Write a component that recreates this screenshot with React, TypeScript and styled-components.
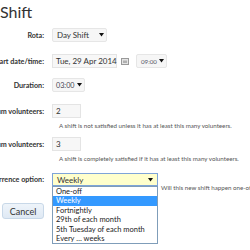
import React from "react";
import styled, { createGlobalStyle } from "styled-components";

const GlobalStyle = createGlobalStyle`
  html, body {
    margin: 0;
    padding: 0;
    background: #fff;
  }
  body {
    font-family: Lato, "Open Sans", sans-serif;
    color: #333;
  }
`;

const recurrenceOptions = [
  "One-off",
  "Weekly",
  "Fortnightly",
  "29th of each month",
  "5th Tuesday of each month",
  "Every \u2026 weeks",
];

const Arrow = () => (
  <ArrowSvg width="5" height="4" viewBox="0 0 5 4">
    <path d="M0 0 H5 L2.5 3.5 Z" fill="#111" />
  </ArrowSvg>
);

const CalendarIcon = () => (
  <svg width="8" height="7" viewBox="0 0 8 7">
    <rect x="0.5" y="0.5" width="7" height="6" fill="#e4e4e4" stroke="#999" />
    <rect x="2" y="2.5" width="4" height="2.5" fill="#b0b0b0" />
  </svg>
);

const App = () => {
  return (
    <Page>
      <GlobalStyle />
      <Title>Shift</Title>
      <Field>
        <Label>Rota:</Label>
        <Select width={55}>
          Day Shift <Arrow />
        </Select>
      </Field>
      <Field gap={12}>
        <Label>Start date/time:</Label>
        <Controls>
          <TextBox width={65}>Tue, 29 Apr 2014</TextBox>
          <IconButton>
            <CalendarIcon />
          </IconButton>
          <Select width={31} pad={4} size={6.2} tone="#556">
            09:00 <Arrow />
          </Select>
        </Controls>
      </Field>
      <Field gap={10}>
        <Label>Duration:</Label>
        <Select width={33} pad={3} size={7.2} tone="#445">
          03:00 <Arrow />
        </Select>
      </Field>
      <Field gap={12}>
        <Label>Minimum volunteers:</Label>
        <TextBox width={29}>2</TextBox>
      </Field>
      <Help>A shift is not satisfied unless it has at least this many volunteers.</Help>
      <Field gap={7}>
        <Label>Maximum volunteers:</Label>
        <TextBox width={29}>3</TextBox>
      </Field>
      <Help>A shift is completely satisfied if it has at least this many volunteers.</Help>
      <Field gap={10}>
        <Label>Recurrence option:</Label>
        <Controls>
          <DropdownWrap>
            <OpenSelect>
              Weekly <Arrow />
            </OpenSelect>
            <OptionList>
              {recurrenceOptions.map((option) => (
                <Option key={option} selected={option === "Weekly"}>
                  {option}
                </Option>
              ))}
            </OptionList>
          </DropdownWrap>
          <SideNote>Will this new shift happen one-off, or repeat?</SideNote>
        </Controls>
      </Field>
      <Field gap={17}>
        <ButtonCell>
          <Button>Cancel</Button>
        </ButtonCell>
      </Field>
    </Page>
  );
};

const Page = styled.div`
  width: 250px;
  height: 250px;
  overflow: hidden;
  display: flex;
  flex-direction: column;
`;
const Title = styled.h1`
  margin: 0;
  height: 28px;
  padding-top: 1px;
  box-sizing: border-box;
  font-size: 16px;
  line-height: 22px;
  font-weight: 400;
  color: #333;
`;
const Field = styled.div<{ gap?: number }>`
  display: grid;
  grid-template-columns: 44px 1fr;
  column-gap: 8px;
  align-items: center;
  margin-top: ${(p) => p.gap ?? 0}px;
`;
const Label = styled.div`
  display: flex;
  justify-content: flex-end;
  white-space: nowrap;
  font-size: 7.2px;
  font-weight: 700;
  color: #333;
`;
const Controls = styled.div`
  display: flex;
  align-items: flex-start;
  gap: 3px;
`;
const ArrowSvg = styled.svg`
  flex-shrink: 0;
`;
const Select = styled.div<{ width: number; pad?: number; size?: number; tone?: string }>`
  box-sizing: border-box;
  width: ${(p) => p.width}px;
  height: 14px;
  padding: 0 2.5px 0 ${(p) => p.pad ?? 4}px;
  display: flex;
  align-items: center;
  justify-content: space-between;
  background: #f6f6f6;
  border: 1px solid #e6e6e6;
  border-radius: 2px;
  font-size: ${(p) => p.size ?? 8}px;
  color: ${(p) => p.tone ?? "#333"};
  white-space: nowrap;
`;
const TextBox = styled.div<{ width: number }>`
  box-sizing: border-box;
  width: ${(p) => p.width}px;
  height: 14px;
  padding: 0 3px;
  display: flex;
  align-items: center;
  background: #f7f7f7;
  border: 1px solid #e4e4e4;
  font-size: 8px;
  white-space: nowrap;
`;
const IconButton = styled.div`
  display: flex;
  align-items: center;
  height: 14px;
  padding: 0 4px 0 1px;
`;
const Help = styled.div`
  margin: 3px 0 0 59px;
  height: 9px;
  line-height: 9px;
  font-size: 6.2px;
  color: #555;
  white-space: nowrap;
`;
const DropdownWrap = styled.div`
  position: relative;
`;
const OpenSelect = styled.div`
  box-sizing: border-box;
  width: 106px;
  height: 13px;
  padding: 0 4px;
  display: flex;
  align-items: center;
  justify-content: space-between;
  background: #ffffcc;
  border: 1px solid #7ea4d8;
  font-size: 8px;
`;
const OptionList = styled.div`
  position: absolute;
  top: 13px;
  left: 0;
  z-index: 2;
  box-sizing: border-box;
  width: 106px;
  background: #fff;
  border: 1px solid #7f9db9;
`;
const Option = styled.div<{ selected?: boolean }>`
  height: 9.4px;
  line-height: 9.4px;
  padding-left: 3px;
  font-size: 7.5px;
  white-space: nowrap;
  background: ${(p) => (p.selected ? "#3399ff" : "transparent")};
  color: ${(p) => (p.selected ? "#fff" : "#222")};
`;
const SideNote = styled.div`
  margin-top: 11px;
  margin-bottom: -11px;
  line-height: 8px;
  font-size: 6.2px;
  color: #555;
  white-space: nowrap;
`;
const ButtonCell = styled.div`
  display: flex;
  justify-content: flex-end;
`;
const Button = styled.button`
  box-sizing: border-box;
  width: 42px;
  height: 16px;
  padding: 0;
  border: 1px solid #c8d8e8;
  border-radius: 3px;
  background: linear-gradient(#eef4fa, #dfe9f4);
  font-family: Lato, "Open Sans", sans-serif;
  font-size: 9px;
  color: #333;
`;

export default App;
